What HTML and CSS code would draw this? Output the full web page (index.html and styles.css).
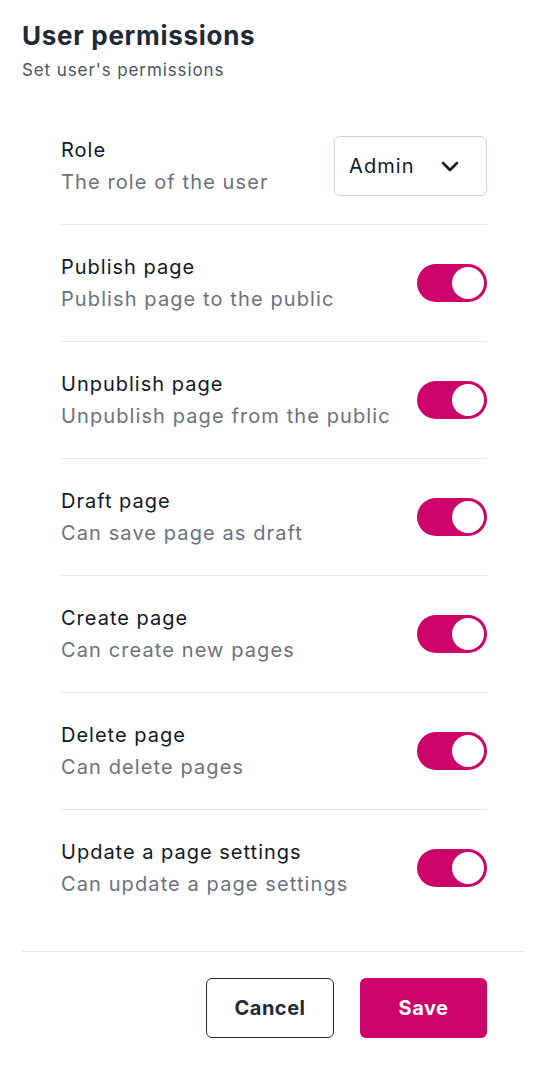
FILE: index.html
```html
<!DOCTYPE html>
<html lang="en">
<head>
    <meta charset="UTF-8">
    <meta name="viewport" content="width=device-width, initial-scale=1.0">
    <title>User permissions</title>
    <link rel="stylesheet" href="styles.css">
</head>
<body>

<div class="panel">
    <div class="header">
        <h1>User permissions</h1>
        <p>Set user's permissions</p>
    </div>

    <div class="list">
        <div class="row">
            <div class="info">
                <div class="name">Role</div>
                <div class="desc">The role of the user</div>
            </div>
            <div class="select">
                <span>Admin</span>
                <svg width="18" height="12" viewBox="0 0 18 12" fill="none" stroke="#111827" stroke-width="2.6" stroke-linecap="round" stroke-linejoin="round">
                    <path d="M2 3l7 7 7-7"/>
                </svg>
            </div>
        </div>

        <div class="row">
            <div class="info">
                <div class="name">Publish page</div>
                <div class="desc">Publish page to the public</div>
            </div>
            <div class="toggle on"><span class="knob"></span></div>
        </div>

        <div class="row">
            <div class="info">
                <div class="name">Unpublish page</div>
                <div class="desc">Unpublish page from the public</div>
            </div>
            <div class="toggle on"><span class="knob"></span></div>
        </div>

        <div class="row">
            <div class="info">
                <div class="name">Draft page</div>
                <div class="desc">Can save page as draft</div>
            </div>
            <div class="toggle on"><span class="knob"></span></div>
        </div>

        <div class="row">
            <div class="info">
                <div class="name">Create page</div>
                <div class="desc">Can create new pages</div>
            </div>
            <div class="toggle on"><span class="knob"></span></div>
        </div>

        <div class="row">
            <div class="info">
                <div class="name">Delete page</div>
                <div class="desc">Can delete pages</div>
            </div>
            <div class="toggle on"><span class="knob"></span></div>
        </div>

        <div class="row">
            <div class="info">
                <div class="name">Update a page settings</div>
                <div class="desc">Can update a page settings</div>
            </div>
            <div class="toggle on"><span class="knob"></span></div>
        </div>
    </div>

    <div class="footer">
        <button class="btn btn-cancel">Cancel</button>
        <button class="btn btn-save">Save</button>
    </div>
</div>

</body>
</html>
```

FILE: styles.css
```css
body {
    margin: 0;
    font-family: Inter, "Noto Sans", sans-serif;
    background-color: #fff;
    color: #111827;
}
.panel {
    padding: 20px 17px 30px 22px;
}
.header h1 {
    margin: 0;
    font-size: 26px;
    line-height: 32px;
    font-weight: 700;
    letter-spacing: 0.7px;
    color: #1f2937;
}
.header p {
    margin: 6px 0 0;
    font-size: 17px;
    line-height: 24px;
    letter-spacing: 0.9px;
    color: #4b5563;
}
.list {
    margin: 26px 38px 0 39px;
}
.row {
    display: flex;
    align-items: center;
    justify-content: space-between;
    padding: 28px 0;
    border-bottom: 1px solid #e5e7eb;
}
.row:last-child {
    border-bottom: none;
}
.info {
    display: flex;
    flex-direction: column;
    gap: 4px;
}
.name {
    font-size: 20px;
    line-height: 28px;
    letter-spacing: 1px;
    color: #111827;
}
.desc {
    font-size: 20px;
    line-height: 28px;
    letter-spacing: 1.1px;
    color: #6b7280;
}
.select {
    box-sizing: border-box;
    width: 153px;
    height: 60px;
    display: flex;
    align-items: center;
    justify-content: space-between;
    padding: 0 27px 0 14px;
    border: 1px solid #d1d5db;
    border-radius: 6px;
    font-size: 20px;
    letter-spacing: 1.1px;
    color: #111827;
}
.toggle {
    box-sizing: border-box;
    width: 70px;
    height: 38px;
    border-radius: 19px;
    background-color: #d1d5db;
    padding: 3px;
    display: flex;
}
.toggle.on {
    background-color: #cc0369;
    justify-content: flex-end;
}
.knob {
    width: 32px;
    height: 32px;
    border-radius: 50%;
    background-color: #fff;
}
.footer {
    display: flex;
    justify-content: flex-end;
    gap: 26px;
    margin-top: 25px;
    padding: 26px 38px 0 0;
    border-top: 1px solid #e5e7eb;
}
.btn {
    width: 128px;
    height: 60px;
    border-radius: 6px;
    font-family: Inter, "Noto Sans", sans-serif;
    font-size: 20px;
    font-weight: 700;
    letter-spacing: 0.5px;
    cursor: pointer;
}
.btn-cancel {
    background-color: #fff;
    border: 1px solid #1f2937;
    color: #1f2937;
}
.btn-save {
    width: 127px;
    background-color: #cc0369;
    border: none;
    color: #fff;
}
```
